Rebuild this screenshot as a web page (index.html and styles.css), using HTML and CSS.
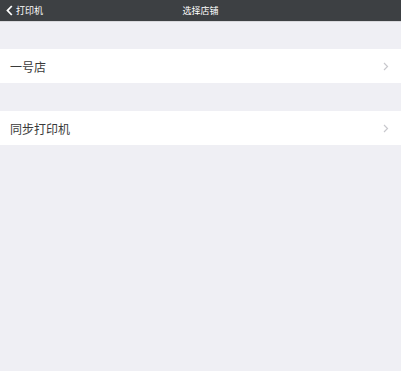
FILE: index.html
```html
<!DOCTYPE html>
<html lang="zh-CN">
<head>
    <meta charset="UTF-8">
    <meta name="viewport" content="width=device-width, initial-scale=1.0">
    <title>选择店铺</title>
    <link rel="stylesheet" href="styles.css">
</head>
<body>
    <div class="nav-bar">
        <div class="nav-back">
            <svg class="back-icon" width="7" height="11" viewBox="0 0 7 11">
                <path d="M5.8 1 L1.5 5.5 L5.8 10" fill="none" stroke="#fff" stroke-width="1.8"/>
            </svg>
            <span>打印机</span>
        </div>
        <div class="nav-title">选择店铺</div>
    </div>

    <div class="list-group">
        <div class="list-item">
            <span class="item-label">一号店</span>
            <svg class="chevron" width="6" height="9" viewBox="0 0 6 9">
                <path d="M1 1 L4.5 4.5 L1 8" fill="none" stroke="#c8c8cd" stroke-width="1.2"/>
            </svg>
        </div>
    </div>

    <div class="list-group">
        <div class="list-item">
            <span class="item-label">同步打印机</span>
            <svg class="chevron" width="6" height="9" viewBox="0 0 6 9">
                <path d="M1 1 L4.5 4.5 L1 8" fill="none" stroke="#c8c8cd" stroke-width="1.2"/>
            </svg>
        </div>
    </div>
</body>
</html>
```
FILE: styles.css
```css
body {
    margin: 0;
    padding: 0;
    background: #efeff4;
    font-family: "Noto Sans CJK SC", "Liberation Sans", sans-serif;
}

.nav-bar {
    position: relative;
    height: 21px;
    background: #3d4043;
    border-bottom: 1px solid #d8d8dc;
    display: flex;
    align-items: center;
    justify-content: center;
    color: #fff;
    font-size: 9px;
}

.nav-back {
    position: absolute;
    left: 6px;
    top: 0;
    height: 21px;
    display: flex;
    align-items: center;
    gap: 3px;
}

.nav-title {
    font-size: 9px;
}

.list-group {
    margin-top: 27px;
    background: #fff;
}

.list-group + .list-group {
    margin-top: 28px;
}

.list-item {
    height: 34px;
    display: flex;
    align-items: center;
    justify-content: space-between;
    padding: 0 12px 0 10px;
}

.item-label {
    font-size: 12px;
    color: #3a3a3a;
}
```
